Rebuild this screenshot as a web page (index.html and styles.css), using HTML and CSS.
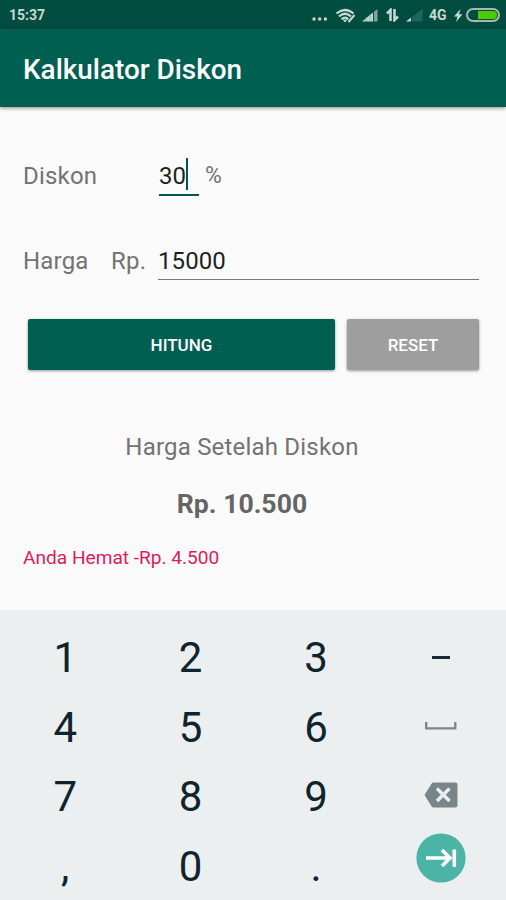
FILE: index.html
```html
<!DOCTYPE html>
<html lang="id">
<head>
<meta charset="utf-8">
<title>Kalkulator Diskon</title>
<link rel="stylesheet" href="styles.css">
</head>
<body>
<div class="screen">
  <div class="statusbar">
    <span class="clock">15:37</span>
    <svg class="dots" width="16" height="4" viewBox="0 0 16 4"><circle cx="2" cy="2" r="1.7"/><circle cx="7.7" cy="2" r="1.7"/><circle cx="13.4" cy="2" r="1.7"/></svg>
    <svg class="wifi" width="20" height="15" viewBox="0 0 20 15"><g fill="none" stroke="#c6d8d3" stroke-width="2.200"><path d="M.5 5.5Q9-1.500 17.500 5.500"/><path d="M3 8.500Q9 3 15 8.500"/><path d="M5.500 11.300Q9 8 12.500 11.300"/></g><path d="M6.500 11.500L9 14.500L11.500 11.500Z" fill="#c6d8d3"/><path d="M12.500 14L18.500 7" stroke="#c6d8d3" stroke-width="2"/></svg>
    <svg class="signal" width="16" height="13" viewBox="0 0 16 13"><path d="M0 12.500L11 3.500V12.500Z" fill="#c6d8d3"/><path d="M12 2.800L15.500 0V12.500H12Z" fill="#7fa39b"/><path d="M4 8V13M8 5V13" stroke="#6f978e" stroke-width=".7"/></svg>
    <svg class="data" width="13" height="14" viewBox="0 0 13 14"><path d="M4.500 13V2L1 5.500M8.500 1V12L12 8.500" fill="none" stroke="#c6d8d3" stroke-width="2.600"/></svg>
    <svg class="signal2" width="17" height="13" viewBox="0 0 17 13"><path d="M0 12.500L5 8.500V12.500Z" fill="#c6d8d3"/><path d="M6 7.700L16.500 0V12.500H6Z" fill="#1d665a"/></svg>
    <span class="network">4G</span>
    <svg class="bolt" width="9" height="13" viewBox="0 0 9 13"><path d="M6.500 0L0 7.500H3.500L2 13L8.500 5.200H5Z" fill="#c6d8d3"/></svg>
    <span class="battery"><span class="charge"></span></span>
  </div>
  <header class="appbar"><h1>Kalkulator Diskon</h1></header>
  <main class="content">
    <div class="row row-discount">
      <span class="label">Diskon</span>
      <span class="field field-discount"><span class="value">30</span><span class="caret"></span></span>
      <span class="percent">%</span>
    </div>
    <div class="row row-price">
      <span class="label">Harga</span>
      <span class="currency">Rp.</span>
      <span class="field field-price"><span class="value">15000</span></span>
    </div>
    <div class="actions">
      <button class="btn btn-primary">HITUNG</button>
      <button class="btn btn-reset">RESET</button>
    </div>
    <div class="result-title"><span>Harga Setelah Diskon</span></div>
    <div class="result"><span>Rp. 10.500</span></div>
    <div class="saving"><span>Anda Hemat -Rp. 4.500</span></div>
  </main>
  <div class="keypad">
    <span class="key">1</span><span class="key">2</span><span class="key">3</span>
    <span class="key"><svg width="18" height="3" viewBox="0 0 18 3"><path d="M0 1.500H18" stroke="#1c2733" stroke-width="3"/></svg></span>
    <span class="key">4</span><span class="key">5</span><span class="key">6</span>
    <span class="key key-space"><svg width="32" height="8" viewBox="0 0 32 8"><path d="M1.200 0V6.300H30.300V0" fill="none" stroke="#78868a" stroke-width="2.300"/></svg></span>
    <span class="key">7</span><span class="key">8</span><span class="key">9</span>
    <span class="key key-delete"><svg width="34" height="26" viewBox="0 0 34 26"><path d="M9.500 .5H31.500Q33.500 .5 33.500 2.500V23.500Q33.500 25.500 31.500 25.500H9.500Q8.200 25.500 7.500 24.300L.5 13L7.500 1.700Q8.200 .5 9.500 .5Z" fill="#78868a"/><path d="M13 6.500L25.500 19M25.500 6.500L13 19" stroke="#eceff1" stroke-width="3.400"/></svg></span>
    <span class="key">,</span><span class="key">0</span><span class="key">.</span>
    <span class="key key-next"><svg width="50" height="50" viewBox="0 0 50 50"><circle cx="25" cy="25" r="24.600" fill="#4bb4a6"/><path d="M10 25H34M26 17L34 25L26 33M38.300 16.500V34" fill="none" stroke="#fff" stroke-width="3.600"/></svg></span>
  </div>
</div>
</body>
</html>
```
FILE: styles.css
```css
* { box-sizing: border-box; }

body {
  margin: 0;
  font-family: Roboto, "Liberation Sans", sans-serif;
}

svg { display: block; flex: none; }

.screen {
  width: 506px;
  height: 900px;
  display: flex;
  flex-direction: column;
  overflow: hidden;
  background: #fafafa;
}

.statusbar {
  height: 29px;
  flex: none;
  display: flex;
  align-items: center;
  padding: 1px 6px 0 9px;
  background: #004d40;
  color: #c6d8d3;
}

.clock {
  width: 303px;
  font-size: 14px;
  font-weight: 700;
}

.dots { fill: #c6d8d3; margin-top: 7px; }
.wifi { margin-left: 8px; }
.signal { margin-left: 6px; }
.data { margin-left: 8px; }
.signal2 { margin-left: 7px; }

.network {
  width: 19px;
  margin-left: 6px;
  font-size: 14px;
  font-weight: 700;
}

.bolt { margin-left: 6px; }

.battery {
  display: flex;
  justify-content: flex-end;
  width: 34px;
  height: 14px;
  margin-left: 3px;
  padding: 1px;
  border: 2px solid #a9b7b3;
  border-radius: 7px;
}

.charge {
  width: 19px;
  border-radius: 0 5px 5px 0;
  background: #4dcb0a;
}

.appbar {
  position: relative;
  height: 78px;
  flex: none;
  display: flex;
  align-items: center;
  padding: 3px 23px 0;
  background: #005f51;
  box-shadow: 0 1px 4px rgba(0, 0, 0, .45);
  color: #fff;
}

h1 {
  margin: 0;
  font-size: 27.9px;
  font-weight: 500;
  line-height: 36px;
}

.content {
  height: 503px;
  flex: none;
  padding: 44px 27px 0 23px;
  color: #737373;
  font-size: 24px;
  line-height: 50px;
}

.row {
  display: flex;
  height: 48px;
}

.label {
  width: 88px;
  flex: none;
  letter-spacing: .2px;
}

.field {
  display: flex;
  color: #1f1f1f;
}

.row-discount .label { width: 136px; }

.field-discount {
  width: 40px;
  height: 45px;
  border-bottom: 2px solid #00584b;
}

.value { letter-spacing: .1px; }

.caret {
  width: 2px;
  height: 32px;
  margin-top: 7px;
  background: #00584b;
}

.percent { margin-left: 6px; font-size: 23px; }

.row-price { margin-top: 37px; }

.currency {
  width: 47px;
  flex: none;
  letter-spacing: .2px;
}

.field-price {
  flex: 1;
  height: 44px;
  border-bottom: 1px solid #777;
}

.actions {
  display: flex;
  gap: 12px;
  margin: 35px 0 0 5px;
}

.btn {
  height: 51px;
  padding: 2px 0 0;
  border: 0;
  border-radius: 2px;
  box-shadow: 0 1px 3px rgba(0, 0, 0, .4);
  color: #fff;
  font: 500 17px/49px Roboto, sans-serif;
}

.btn-primary { width: 307px; background: #005f51; }
.btn-reset { flex: 1; background: #9e9e9e; }

.result-title, .result {
  width: 438px;
  height: 48px;
  text-align: center;
}

.result-title { margin-top: 52px; letter-spacing: .2px; }

.result {
  margin-top: 10px;
  color: #656565;
  font-size: 26.6px;
  font-weight: 700;
  line-height: 48px;
}

.saving {
  margin-top: 5px;
  color: #dd1b60;
  font-size: 19.1px;
}

.keypad {
  flex: 1;
  display: grid;
  grid-template-columns: repeat(4, 125.4px);
  grid-auto-rows: 69.8px;
  padding: 13px 0 0 2.5px;
  background: #eceff0;
  color: #10242d;
  font-size: 42px;
}

.key {
  display: flex;
  align-items: center;
  justify-content: center;
  line-height: 48px;
}

.key-space { padding-bottom: 4px; }
.key-delete { padding-bottom: 4px; }
.key-next { padding-bottom: 18px; }
```
